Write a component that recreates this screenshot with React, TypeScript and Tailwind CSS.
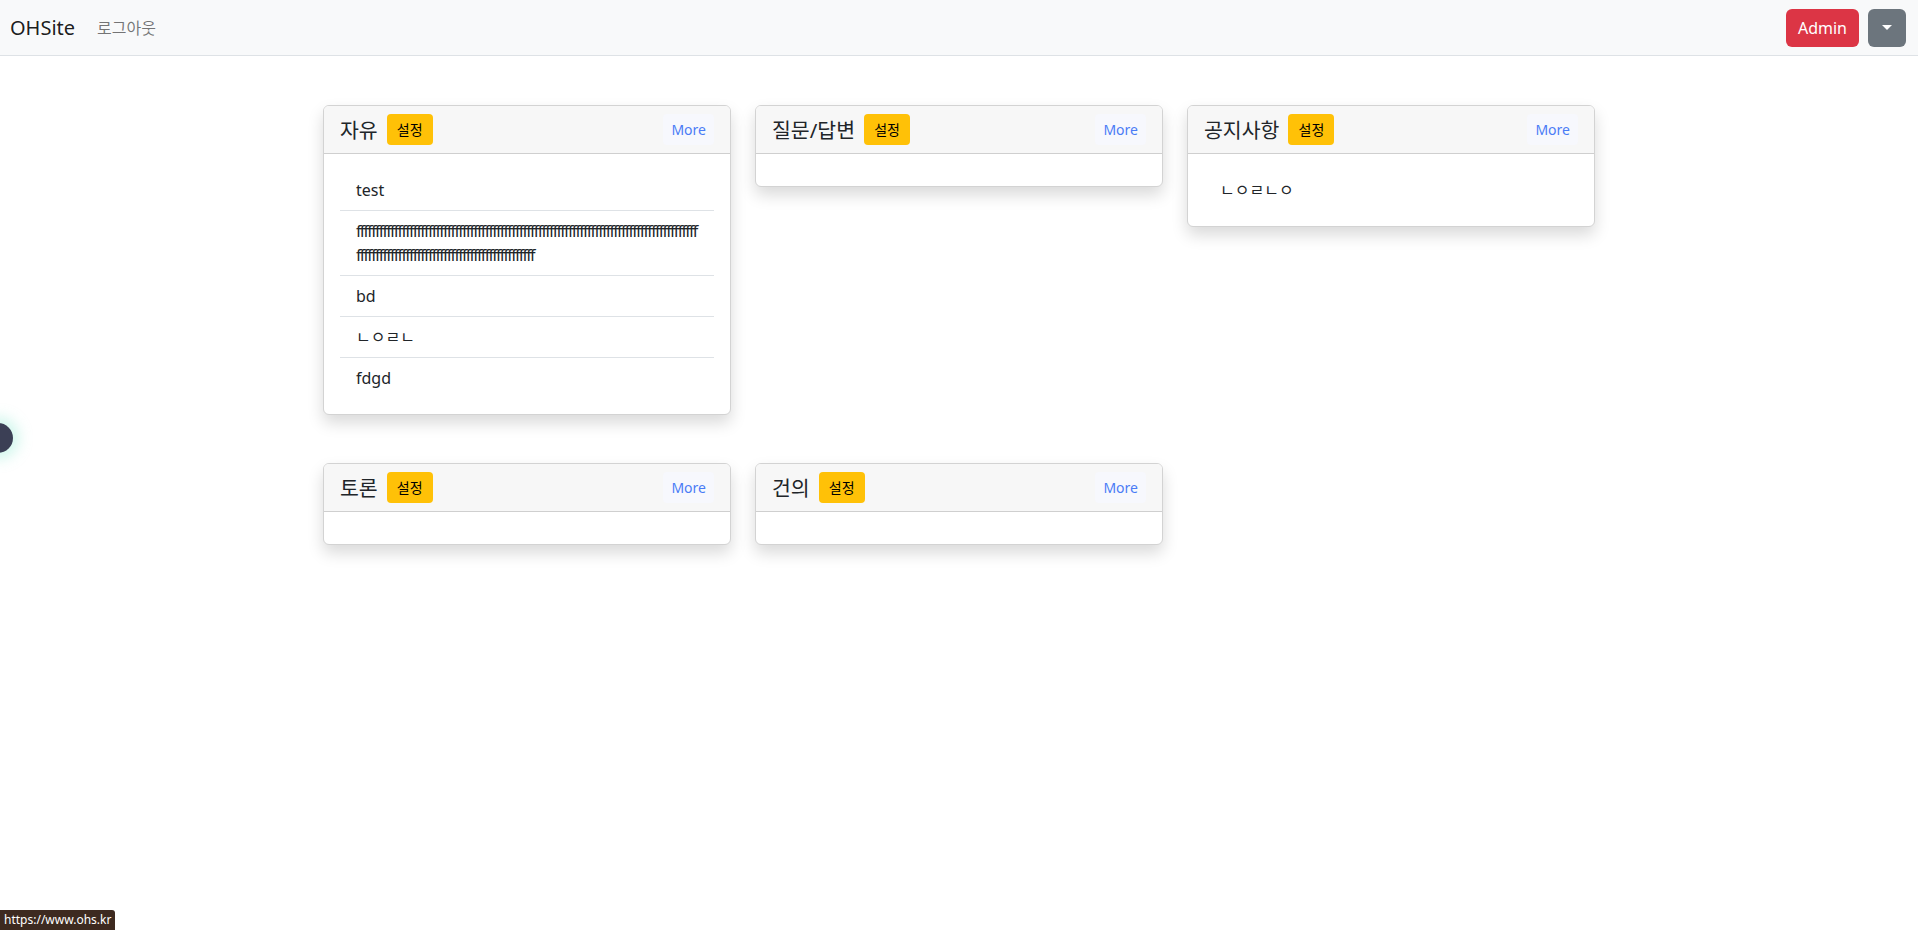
import React from "react"

type Board = {
  id: string
  title: string
  posts: string[]
}

const longF = "f".repeat(137)

const boards: Board[] = [
  { id: "free", title: "자유", posts: ["test", longF, "bd", "ㄴㅇㄹㄴ", "fdgd"] },
  { id: "qna", title: "질문/답변", posts: [] },
  { id: "notice", title: "공지사항", posts: ["ㄴㅇㄹㄴㅇ"] },
  { id: "debate", title: "토론", posts: [] },
  { id: "suggest", title: "건의", posts: [] },
]

function BoardCard({ board }: { board: Board }) {
  return (
    <div className="self-start bg-white border border-[#d3d3d3] rounded-[6px] shadow-[0_8px_16px_rgba(0,0,0,0.15)] overflow-hidden">
      <div className="h-[48px] px-4 bg-[#f7f7f7] border-b border-[#cfcfcf] flex items-center justify-between">
        <div className="flex items-center">
          <h5 className="text-[20.5px] leading-[24px] text-[#212529]">{board.title}</h5>
          <button className="ml-[9px] h-[31px] w-[46px] rounded-[4px] bg-[#ffc107] text-[14px] text-black flex items-center justify-center">
            설정
          </button>
        </div>
        <button className="h-[31px] px-2 rounded-[4px] bg-[#f7f8fd] text-[14px] text-[#4a7cf6]">
          More
        </button>
      </div>

      <div className="p-4">
        {board.posts.map((post, i) => (
          <div
            key={i}
            className={`px-4 py-2 text-[16px] leading-[24px] text-[#212529] break-all ${
              i < board.posts.length - 1 ? "border-b border-[#dee2e6]" : ""
            } ${post === longF ? "tracking-[-1.72px]" : ""}`}
          >
            {post}
          </div>
        ))}
      </div>
    </div>
  )
}

export default function App() {
  return (
    <div
      className="min-h-screen bg-white relative"
      style={{ fontFamily: '"Noto Sans", "Noto Sans CJK KR", sans-serif' }}
    >
      <nav className="h-[56px] bg-[#f8f9fa] border-b border-[#dee2e6] pl-[10px] pr-3 flex items-center justify-between">
        <div className="flex items-center">
          <a className="text-[20px] text-black/90 mr-[14px]">OHSite</a>
          <a className="px-2 text-[16px] text-black/55">로그아웃</a>
        </div>

        <div className="flex items-center gap-[9px]">
          <button className="h-[38px] px-3 rounded-[6px] bg-[#dc3545] text-white text-[16px]">
            Admin
          </button>
          <button className="h-[38px] w-[38px] rounded-[6px] bg-[#6c757d] flex items-center justify-center">
            <span className="w-0 h-0 border-l-[5px] border-r-[5px] border-t-[5px] border-l-transparent border-r-transparent border-t-white" />
          </button>
        </div>
      </nav>

      <div className="max-w-[1320px] mx-auto px-6 pt-[49px]">
        <div className="grid grid-cols-3 gap-x-6 gap-y-[48px]">
          {boards.map((board) => (
            <BoardCard key={board.id} board={board} />
          ))}
        </div>
      </div>

      <div className="fixed left-[-17px] top-[423px] w-[30px] h-[30px] rounded-full bg-[#3b3f55] shadow-[0_0_14px_6px_rgba(120,230,200,0.35)]" />

      <div className="fixed left-0 bottom-0 h-[20px] px-[4px] bg-[#3d2a20] text-white text-[12px] leading-[20px] rounded-tr-[3px]">
        https://www.ohs.kr
      </div>
    </div>
  )
}
